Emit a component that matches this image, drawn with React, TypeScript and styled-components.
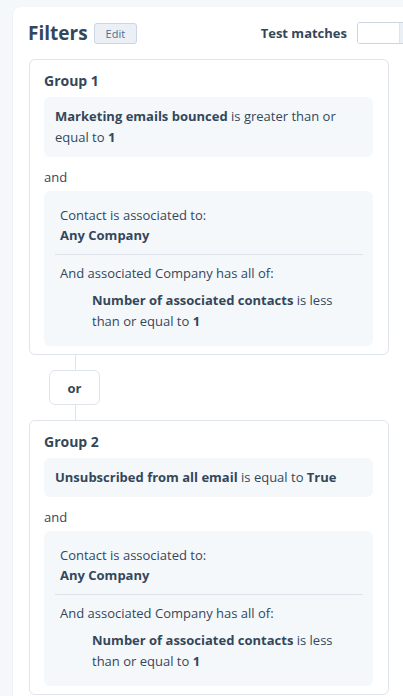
import styled, { createGlobalStyle } from "styled-components";

const GlobalStyle = createGlobalStyle`
  html, body {
    margin: 0;
    padding: 0;
    background: #f5f8fa;
    overflow: hidden;
  }
  body {
    font-family: "Open Sans", "Noto Sans", sans-serif;
    color: #33475b;
  }
  b {
    font-weight: 700;
  }
`;

const Page = styled.div`
  padding: 7px 0 0 13px;
  height: 696px;
  box-sizing: border-box;
`;

const Panel = styled.div`
  width: 430px;
  min-height: 720px;
  background: #ffffff;
  border-radius: 8px 0 0 0;
  box-shadow: -1px 0 0 #eef2f6;
  padding: 15px 0 0 16px;
  box-sizing: border-box;
`;

const Header = styled.div`
  display: flex;
  align-items: center;
  width: 391px;
  height: 22px;
  margin: 0 0 15px -1px;
`;

const Title = styled.h2`
  margin: 0;
  font-size: 19px;
  font-weight: 700;
  line-height: 22px;
`;

const EditButton = styled.button`
  margin-left: 6px;
  height: 21px;
  padding: 0 11px;
  border: 1px solid #cbd6e2;
  border-radius: 3px;
  background: #eaf0f6;
  color: #506e91;
  font-family: inherit;
  font-size: 11px;
`;

const TestLabel = styled.span`
  margin-left: auto;
  font-size: 13px;
  font-weight: 700;
`;

const Toggle = styled.div`
  margin-left: 10px;
  display: flex;
  width: 62px;
  height: 22px;
  border: 1px solid #cbd6e2;
  border-radius: 3px;
  overflow: hidden;
  box-sizing: border-box;
`;

const ToggleSide = styled.div<{ $on?: boolean }>`
  width: ${(p) => (p.$on ? "22px" : "auto")};
  flex: ${(p) => (p.$on ? "none" : "1")};
  background: ${(p) => (p.$on ? "#ffffff" : "#eaf0f6")};
  border-left: ${(p) => (p.$on ? "none" : "1px solid #dfe3eb")};
  display: flex;
  align-items: center;
  padding-left: 19px;
`;

const Knob = styled.span`
  width: 14px;
  height: 14px;
  border-radius: 50%;
  background: #cbd6e2;
`;

const Groups = styled.div`
  width: 360px;
  display: flex;
  flex-direction: column;
`;

const GroupCard = styled.section`
  border: 1px solid #dfe3eb;
  border-radius: 6px;
  padding: 11px 15px 8px 14px;
`;

const GroupTitle = styled.h3`
  margin: 0 0 7px 0;
  font-size: 14px;
  font-weight: 700;
  line-height: 19px;
`;

const Condition = styled.div`
  background: #f5f8fa;
  border-radius: 6px;
  padding: 9px 11px 9px 11px;
  font-size: 13px;
  line-height: 21px;
`;

const AndLabel = styled.div`
  font-size: 13px;
  line-height: 18px;
  padding: 11px 0 5px 0;
`;

const AssocBox = styled.div`
  background: #f5f8fa;
  border-radius: 6px;
  padding: 14px 10px 14px 11px;
  font-size: 13px;
  line-height: 20px;
`;

const AssocTop = styled.div`
  padding: 0 5px 9px;
`;

const Divider = styled.hr`
  border: none;
  border-top: 1px solid #dfe3eb;
  margin: 0 0 8px;
`;

const AssocBottom = styled.div`
  padding: 0 5px;
`;

const Nested = styled.div`
  padding: 7px 0 0 32px;
  line-height: 21px;
`;

const Connector = styled.div`
  display: flex;
  flex-direction: column;
  align-items: flex-start;
  padding-left: 20px;
`;

const Line = styled.div`
  width: 1px;
  height: 15px;
  margin-left: 26px;
  background: #dfe3eb;
`;

const OrPill = styled.div`
  width: 51px;
  height: 35px;
  box-sizing: border-box;
  border: 1px solid #dfe3eb;
  border-radius: 6px;
  display: flex;
  align-items: center;
  justify-content: center;
  font-size: 13px;
  font-weight: 700;
`;

type GroupT = {
  name: string;
  condition: JSX.Element;
};

const groups: GroupT[] = [
  {
    name: "Group 1",
    condition: (
      <>
        <b>Marketing emails bounced</b> is greater than or equal to <b>1</b>
      </>
    ),
  },
  {
    name: "Group 2",
    condition: (
      <>
        <b>Unsubscribed from all email</b> is equal to <b>True</b>
      </>
    ),
  },
];

function Group({ group }: { group: GroupT }) {
  return (
    <GroupCard>
      <GroupTitle>{group.name}</GroupTitle>
      <Condition>{group.condition}</Condition>
      <AndLabel>and</AndLabel>
      <AssocBox>
        <AssocTop>
          Contact is associated to:
          <br />
          <b>Any Company</b>
        </AssocTop>
        <Divider />
        <AssocBottom>
          And associated Company has all of:
          <Nested>
            <b>Number of associated contacts</b> is less than or equal to <b>1</b>
          </Nested>
        </AssocBottom>
      </AssocBox>
    </GroupCard>
  );
}

export default function App() {
  return (
    <>
      <GlobalStyle />
      <Page>
        <Panel>
          <Header>
            <Title>Filters</Title>
            <EditButton>Edit</EditButton>
            <TestLabel>Test matches</TestLabel>
            <Toggle>
              <ToggleSide $on />
              <ToggleSide>
                <Knob />
              </ToggleSide>
            </Toggle>
          </Header>
          <Groups>
            {groups.map((g, i) => (
              <div key={g.name}>
                {i > 0 && (
                  <Connector>
                    <Line />
                    <OrPill>or</OrPill>
                    <Line />
                  </Connector>
                )}
                <Group group={g} />
              </div>
            ))}
          </Groups>
        </Panel>
      </Page>
    </>
  );
}
